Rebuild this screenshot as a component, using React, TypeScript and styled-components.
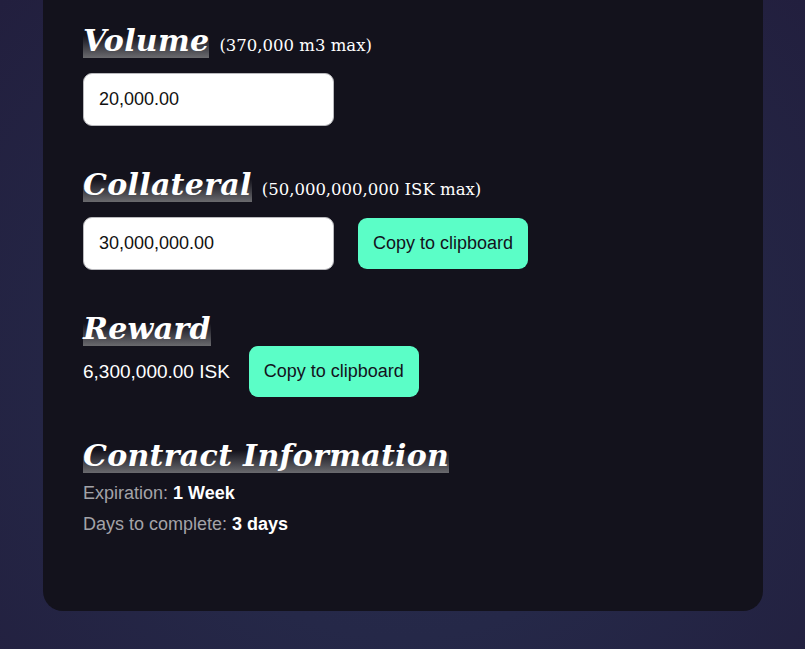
import React from 'react';
import styled, { createGlobalStyle } from 'styled-components';

const GlobalStyle = createGlobalStyle`
  html, body {
    margin: 0;
    padding: 0;
  }
  body {
    min-height: 649px;
    background: radial-gradient(ellipse at 50% 60%, #282c4d 0%, #252848 45%, #221f3e 100%);
    font-family: 'Liberation Sans', Arial, sans-serif;
    overflow: hidden;
  }
`;

const Page = styled.div`
  padding: 0 42px 38px 43px;
`;

const Card = styled.div`
  margin-top: -40px;
  background: #13121c;
  border-radius: 0 0 20px 20px;
  padding: 65px 40px 76px;
  color: #fff;
`;

const Section = styled.section<{ $gap?: number }>`
  margin-top: ${(p) => p.$gap ?? 0}px;
`;

const TitleRow = styled.div`
  display: flex;
  align-items: baseline;
  gap: 10px;
  margin-top: -2px;
`;

const Title = styled.h2`
  margin: 0;
  display: inline;
  font-family: 'DejaVu Serif', 'Liberation Serif', Georgia, serif;
  font-style: italic;
  font-weight: bold;
  font-size: 30px;
  line-height: 35px;
  letter-spacing: 0.3px;
  color: #fff;
  background: linear-gradient(to bottom, rgba(19, 18, 28, 0) 35%, #6a6a6e 100%);
`;

const Limit = styled.span`
  font-family: 'DejaVu Serif', 'Liberation Serif', Georgia, serif;
  font-size: 16.5px;
  color: #fff;
`;

const Row = styled.div<{ $top: number; $gap?: number }>`
  display: flex;
  align-items: center;
  gap: ${(p) => p.$gap ?? 24}px;
  margin-top: ${(p) => p.$top}px;
`;

const Field = styled.input`
  box-sizing: border-box;
  width: 251px;
  height: 53px;
  border: 1px solid #b9b9bd;
  border-radius: 9px;
  background: #fff;
  padding: 0 15px;
  font-family: 'Liberation Sans', Arial, sans-serif;
  font-size: 18px;
  color: #111;
  outline: none;
`;

const CopyButton = styled.button`
  box-sizing: border-box;
  width: 170px;
  height: 51px;
  border: none;
  border-radius: 9px;
  background: #5bfec7;
  color: #13121c;
  font-family: 'Liberation Sans', Arial, sans-serif;
  font-size: 18px;
  cursor: pointer;
`;

const Amount = styled.span`
  font-size: 19px;
  color: #fff;
`;

const InfoList = styled.div`
  margin-top: 10px;
  display: flex;
  flex-direction: column;
  gap: 10px;
`;

const InfoLine = styled.div`
  font-size: 18px;
  line-height: 21px;
  color: #a3a3a8;
  b {
    color: #fff;
  }
`;

export default function App() {
  return (
    <>
      <GlobalStyle />
      <Page>
        <Card>
          <Section>
            <TitleRow>
              <Title>Volume</Title>
              <Limit>(370,000 m3 max)</Limit>
            </TitleRow>
            <Row $top={15}>
              <Field defaultValue="20,000.00" />
            </Row>
          </Section>

          <Section $gap={43}>
            <TitleRow>
              <Title>Collateral</Title>
              <Limit>(50,000,000,000 ISK max)</Limit>
            </TitleRow>
            <Row $top={15}>
              <Field defaultValue="30,000,000.00" />
              <CopyButton>Copy to clipboard</CopyButton>
            </Row>
          </Section>

          <Section $gap={43}>
            <TitleRow>
              <Title>Reward</Title>
            </TitleRow>
            <Row $top={0} $gap={19}>
              <Amount>6,300,000.00 ISK</Amount>
              <CopyButton>Copy to clipboard</CopyButton>
            </Row>
          </Section>

          <Section $gap={43}>
            <TitleRow>
              <Title>Contract Information</Title>
            </TitleRow>
            <InfoList>
              <InfoLine>
                Expiration: <b>1 Week</b>
              </InfoLine>
              <InfoLine>
                Days to complete: <b>3 days</b>
              </InfoLine>
            </InfoList>
          </Section>
        </Card>
      </Page>
    </>
  );
}
